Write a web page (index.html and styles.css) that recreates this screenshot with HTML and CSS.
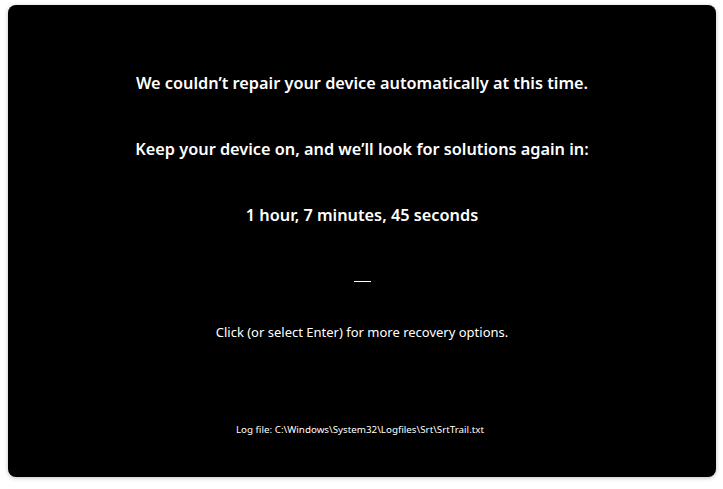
FILE: index.html
```html
<!DOCTYPE html>
<html>
<head>
<meta charset="utf-8">
<link rel="stylesheet" href="styles.css">
</head>
<body>
<div class="screen">
  <p class="msg first">We couldn’t repair your device automatically at this time.</p>
  <p class="msg second">Keep your device on, and we’ll look for solutions again in:</p>
  <p class="msg timer">1 hour, 7 minutes, 45 seconds</p>
  <div class="dash"></div>
  <p class="hint">Click (or select Enter) for more recovery options.</p>
  <p class="log">Log file: C:\Windows\System32\Logfiles\Srt\SrtTrail.txt</p>
</div>
</body>
</html>
```
FILE: styles.css
```css
html, body {
  margin: 0;
  padding: 0;
  background: #ffffff;
}
body {
  padding: 5px 7px 12px 8px;
}
.screen {
  box-sizing: border-box;
  height: 472px;
  background: #000;
  border-radius: 8px;
  box-shadow: 0 1px 4px rgba(0,0,0,0.25);
  color: #fff;
  font-family: "Noto Sans", "Open Sans", sans-serif;
  display: flex;
  flex-direction: column;
  align-items: center;
  padding-top: 66px;
}
.msg, .hint, .log {
  margin: 0;
  text-align: center;
}
.msg {
  font-size: 16.3px;
  font-weight: 600;
  line-height: 24px;
}
.msg.second { margin-top: 42px; }
.msg.timer { margin-top: 42px; }
.dash {
  width: 17px;
  height: 1px;
  background: #fff;
  margin-top: 54px;
}
.hint {
  font-size: 13px;
  line-height: 20px;
  margin-top: 40px;
}
.log {
  font-size: 9.8px;
  line-height: 16px;
  margin-top: 80px;
  padding-right: 4px;
}
```
